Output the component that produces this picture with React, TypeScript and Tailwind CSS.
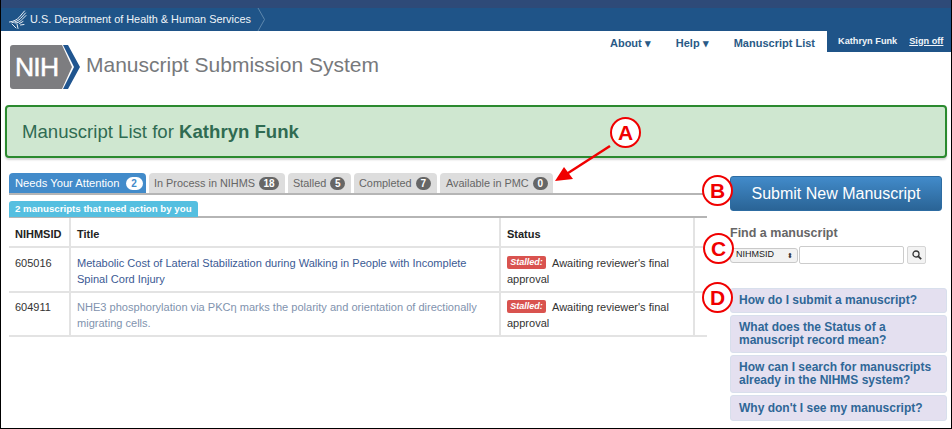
const font = "font-['Liberation_Sans',Arial,sans-serif]";

function Eagle() {
  return (
    <svg width="18" height="20" viewBox="0 0 18 20" fill="none" stroke="#e8eef5" strokeWidth="1" strokeLinecap="round">
      <path d="M0.5 12 C5 11.5 8 9.5 10 7.5 L15.5 1" />
      <path d="M3 12.5 C7 12 9.5 10.5 11.5 8.5 L16.5 3" />
      <path d="M6 13 C9 13 11.5 11.5 13 9.5 L17 5.5" />
      <path d="M8 14 L9 18.5 M10.5 13.5 L14 11.5 M11.5 15 L15 14.5 M3 14 L7 18" />
    </svg>
  );
}

function Tab({ label, n, active, className }: { label: string; n: string; active?: boolean; className: string }) {
  return (
    <div
      className={
        "h-[20px] rounded-t-[4px] flex items-center whitespace-nowrap " +
        (active ? "bg-[#428bca] text-white text-[11.2px] " : "bg-[#dddddd] text-[#666666] text-[10.9px] ") +
        className
      }
    >
      <span>{label}</span>
      <span
        className={
          "h-[13px] rounded-full flex items-center justify-center text-[10px] font-bold " +
          (active ? "bg-white text-[#428bca] w-[17px] ml-[6px]" : "bg-[#666666] text-white ml-[4px] " + (n.length > 1 ? "w-[20px]" : "w-[15px]"))
        }
      >
        {n}
      </span>
    </div>
  );
}

function Status() {
  return (
    <div className="text-[11px] leading-[16px] text-[#333333]">
      <div className="flex items-center h-[16px] whitespace-nowrap">
        <span className="block bg-[#d9534f] text-white text-[9px] leading-[13px] font-bold italic text-center w-[39px] h-[13px] rounded-[2px] mr-[6px] -mt-[2px]">
          Stalled:
        </span>
        <span>Awaiting reviewer's final</span>
      </div>
      <div>approval</div>
    </div>
  );
}

function Row({ id, title, color, h, pt }: { id: string; title: string; color: string; h: string; pt: string }) {
  return (
    <div className={"flex border-b-[2px] border-[#e3e3e3] leading-[16px] " + h}>
      <div className={"w-[62px] border-r-[2px] border-[#e3e3e3] pl-[6px] text-[11px] text-[#333333] " + pt}>{id}</div>
      <div className={"w-[430px] border-r-[2px] border-[#e3e3e3] pl-[6px] pr-[5px] text-[11.05px] " + pt + " " + color}>{title}</div>
      <div className={"w-[194px] border-r-[2px] border-[#e3e3e3] pl-[6px] pr-[10px] " + pt}>
        <Status />
      </div>
    </div>
  );
}

function Faq({ lines, h }: { lines: string[]; h: string }) {
  return (
    <div className={"bg-[#e4e0f0] border border-[#d8dfec] rounded-[3px] pl-[8px] flex flex-col justify-center text-[12px] leading-[13px] font-bold text-[#2f6797] " + h}>
      {lines.map((l) => (
        <div key={l}>{l}</div>
      ))}
    </div>
  );
}

function Mark({ c, x, y }: { c: string; x: string; y: string }) {
  return (
    <div
      className={
        "absolute w-[31px] h-[31px] rounded-full border-[2px] border-[#f00000] bg-white text-[#f00000] text-[21px] font-bold flex items-center justify-center " +
        x + " " + y
      }
    >
      {c}
    </div>
  );
}

export default function App() {
  return (
    <div className={"relative w-[952px] h-[429px] overflow-hidden bg-white border-x border-b border-black " + font}>
      <div className="h-[8px] bg-[#2e4a78]" />
      <div className="h-[23px] bg-[#1f5488] flex items-center pl-[8px] text-[10.9px] text-[#f0f4f8]">
        <Eagle />
        <span className="ml-[3px]">U.S. Department of Health &amp; Human Services</span>
        <svg className="ml-[6px]" width="9" height="23" viewBox="0 0 9 23" fill="none" stroke="#5f88ad" strokeWidth="1">
          <path d="M1 0 L7.5 11.5 L1 23" />
        </svg>
      </div>

      <div className="h-[74px] flex justify-between">
        <div className="flex items-start pl-[9px] pt-[14px]">
          <div className="relative w-[71px] h-[45px]">
            <svg className="absolute left-0 top-0" width="71" height="45" viewBox="0 0 71 45">
              <path d="M3 0 H52 L62 22 L52 44 H3 Q0 44 0 41 V3 Q0 0 3 0 Z" fill="#7d7d80" />
              <path d="M53 0 H58 L70 22 L58 44 H53 L64 22 Z" fill="#20558f" />
            </svg>
            <span className="absolute left-[5px] top-[9px] text-[26.5px] leading-[27px] text-white tracking-[-0.8px] [-webkit-text-stroke:0.5px_white]">NIH</span>
          </div>
          <div className="ml-[5px] mt-[6px] text-[21px] leading-[28px] text-[#77797c]">Manuscript Submission System</div>
        </div>
        <div className="flex items-start text-[11px] font-bold text-[#2a5a86] whitespace-nowrap">
          <div className="pt-[4px] leading-[16px] flex">
            <span className="mr-[25px]">About ▾</span>
            <span className="mr-[25px]">Help ▾</span>
            <span className="mr-[12px]">Manuscript List</span>
          </div>
          <div className="h-[21px] w-[124px] bg-[#1f5488] flex items-center pl-[11px] text-[9.2px] text-[#f0f4f8]">
            <span className="mr-[12px]">Kathryn Funk</span>
            <span className="underline">Sign off</span>
          </div>
        </div>
      </div>

      <div className="mx-[4px] h-[53px] bg-[#cfe7d0] border-[2px] border-[#2b8a2f] rounded-[4px] shadow-[0_2px_2px_#d5d5d5] flex items-center pl-[15px] text-[18.6px] text-[#2f6b52]">
        <span>Manuscript List for&nbsp;</span>
        <b>Kathryn Funk</b>
      </div>

      <div className="flex mt-[15px]">
        <div className="ml-[8px] w-[698px]">
          <div className="flex gap-[3px] border-b-[2px] border-[#b5b5b5] h-[22px]">
            <Tab label="Needs Your Attention" n="2" active className="pl-[6px] w-[137px]" />
            <Tab label="In Process in NIHMS" n="18" className="pl-[5px] w-[136px]" />
            <Tab label="Stalled" n="5" className="pl-[5px] w-[63px]" />
            <Tab label="Completed" n="7" className="pl-[5px] w-[83px]" />
            <Tab label="Available in PMC" n="0" className="pl-[6px] w-[113px]" />
          </div>
          <div className="mt-[6px] flex border-b-[2px] border-[#b5b5b5] h-[17px]">
            <div className="h-[16px] rounded-t-[3px] bg-[#55bfe0] text-white text-[9.7px] font-bold px-[6px] leading-[16px]">
              2 manuscripts that need action by you
            </div>
          </div>
          <div className="flex h-[30px] border-b-[2px] border-[#e3e3e3] text-[11px] font-bold text-[#222222]">
            <div className="w-[62px] border-r-[2px] border-[#e3e3e3] pl-[6px] pt-[8px]">NIHMSID</div>
            <div className="w-[430px] border-r-[2px] border-[#e3e3e3] pl-[6px] pt-[8px]">Title</div>
            <div className="w-[194px] border-r-[2px] border-[#e3e3e3] pl-[6px] pt-[8px]">Status</div>
          </div>
          <Row
            id="605016"
            title="Metabolic Cost of Lateral Stabilization during Walking in People with Incomplete Spinal Cord Injury"
            color="text-[#3b5a94]"
            h="h-[45px]"
            pt="pt-[7px]"
          />
          <Row
            id="604911"
            title="NHE3 phosphorylation via PKCη marks the polarity and orientation of directionally migrating cells."
            color="text-[#7f93ae]"
            h="h-[44px]"
            pt="pt-[6px]"
          />
        </div>

        <div className="ml-[23px] w-[217px] -mt-[1px]">
          <div className="mt-[4px] w-[212px] h-[35px] rounded-[3px] bg-gradient-to-b from-[#428bca] to-[#2a6496] border border-[#2d6ca2] text-white text-[16px] flex items-center justify-center">
            Submit New Manuscript
          </div>
          <div className="mt-[14px] text-[12.5px] leading-[16px] font-bold text-[#666666]">Find a manuscript</div>
          <div className="mt-[5px] flex items-center h-[18px]">
            <div className="w-[68px] h-[15px] rounded-[3px] border border-[#c9c9c9] bg-[#f2f2f2] text-[9px] text-[#222222] flex items-center justify-between pl-[5px] pr-[4px]">
              <span>NIHMSID</span>
              <span className="text-[7px] leading-[7px] text-[#333333]">⬍</span>
            </div>
            <div className="ml-[1px] w-[105px] h-[18px] border-[1.5px] border-[#cccccc] rounded-[2px] bg-white" />
            <div className="ml-[3px] w-[19px] h-[18px] border border-[#d5d5d5] rounded-[2px] bg-[#f3f3f3] flex items-center justify-center">
              <svg width="10" height="10" viewBox="0 0 10 10" fill="none" stroke="#333333" strokeWidth="1.3">
                <circle cx="4" cy="4" r="3" />
                <path d="M6.3 6.3 L9.2 9.2" strokeWidth="1.7" />
              </svg>
            </div>
          </div>
          <div className="mt-[24px] flex flex-col gap-[2px]">
            <Faq lines={["How do I submit a manuscript?"]} h="h-[25px]" />
            <Faq lines={["What does the Status of a", "manuscript record mean?"]} h="h-[38px]" />
            <Faq lines={["How can I search for manuscripts", "already in the NIHMS system?"]} h="h-[38px]" />
            <Faq lines={["Why don't I see my manuscript?"]} h="h-[26px]" />
          </div>
        </div>
      </div>

      <svg className="absolute left-[550px] top-[140px]" width="70" height="50" viewBox="0 0 70 50">
        <path d="M59 6 L14 35" stroke="#f00000" strokeWidth="2.5" />
        <path d="M4 41 L13 27 L22 39 Z" fill="#f00000" />
      </svg>
      <Mark c="A" x="left-[609px]" y="top-[117px]" />
      <Mark c="B" x="left-[701px]" y="top-[175px]" />
      <Mark c="C" x="left-[702px]" y="top-[233px]" />
      <Mark c="D" x="left-[701px]" y="top-[282px]" />
    </div>
  );
}
